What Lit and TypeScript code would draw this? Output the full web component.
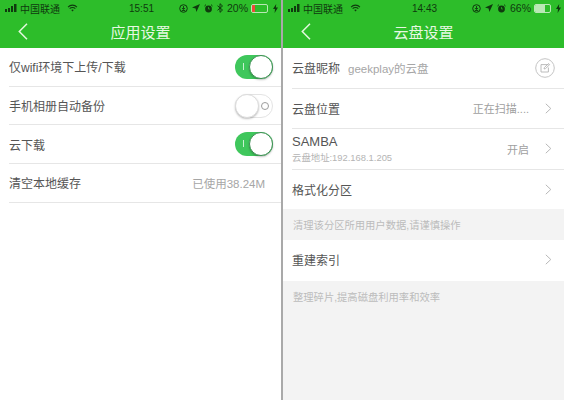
import { LitElement, html, css, svg } from "lit";
import { customElement } from "lit/decorators.js";

const chevron = html`<svg class="chev" width="7" height="11" viewBox="0 0 7 11"><path d="M.8.8l5 4.700-5 4.700" fill="none" stroke="#b8b8b8" stroke-width="1"/></svg>`;

const back = html`<svg class="back" width="10" height="17" viewBox="0 0 10 17"><path d="M9 .8L1.300 8.500 9 16.200" fill="none" stroke="#e4f7df" stroke-width="1.500"/></svg>`;

const signal = html`<svg width="12" height="8" viewBox="0 0 12 8"><path d="M0 5h2v3H0zM3 4h2v4H3zM6 2h2v6H6zM9 0h2.500v8H9z" fill="#0f3a0e"/></svg>`;

const wifi = html`<svg width="11" height="8" viewBox="0 0 12 9"><path d="M1 3.400a7 7 0 0 1 10 0M2.800 5.200a4.500 4.500 0 0 1 6.400 0" fill="none" stroke="#0f3a0e" stroke-width="1.200"/><path d="M4.600 6.800a2 2 0 0 1 2.800 0L6 8.300z" fill="#0f3a0e"/></svg>`;

const lock = html`<svg width="9" height="9" viewBox="0 0 9 9"><circle cx="4.500" cy="4.500" r="3.800" fill="none" stroke="#0f3a0e"/><path d="M4.500 2v3M3 4l1.500 1.600L6 4M2.800 6.500h3.400" fill="none" stroke="#0f3a0e" stroke-width=".9"/></svg>`;

const arrow = html`<svg width="8" height="8" viewBox="0 0 8 8"><path d="M8 0L0 3.600l3.600.8L4.400 8z" fill="#0f3a0e"/></svg>`;

const alarm = html`<svg width="9" height="9" viewBox="0 0 9 9"><circle cx="4.500" cy="5" r="3.400" fill="#0f3a0e"/><path d="M.5 2L2 .6M8.500 2L7 .6" stroke="#0f3a0e"/><path d="M4.500 3v2h1.400" fill="none" stroke="#2fbd2b" stroke-width=".7"/></svg>`;

const bluetooth = html`<svg width="6" height="10" viewBox="0 0 6 10"><path d="M.5 2.700l5 4.300L3 9.300V.7L5.500 3l-5 4.300" fill="none" stroke="#0f3a0e"/></svg>`;

const bolt = html`<svg width="5" height="9" viewBox="0 0 5 9"><path d="M3.200 0L0 5h2l-.4 4L5 3.600H2.900z" fill="#0f3a0e"/></svg>`;

const editIcon = svg`<circle cx="10" cy="10" r="9.300" fill="#fff" stroke="#c4c4c4"/><path d="M13.500 6.600H6v7.400h7.400V9.500" fill="none" stroke="#b4b4b4" stroke-width=".9"/><path d="M9 11l.4-1.500 4.200-4 1.100 1.100-4.200 4z" fill="none" stroke="#b4b4b4" stroke-width=".9"/>`;

function battery(level: number, color: string) {
  return html`<span class="battery"><span class="fill" style="width:${level}%;background:${color}"></span></span>`;
}

function statusBar(time: string, extra: unknown, pct: string, level: number, color: string) {
  return html`<div class="status">
    <div class="status-side">${signal}<span class="carrier">中国联通</span>${wifi}</div>
    <div class="time">${time}</div>
    <div class="status-side end">${lock}${arrow}${alarm}${extra}<span class="pct">${pct}</span>${battery(level, color)}${bolt}</div>
  </div>`;
}

@customElement("app-root")
export class AppRoot extends LitElement {
  static styles = css`
    :host {
      display: block;
      width: 564px;
      height: 400px;
      overflow: hidden;
      font-family: "Liberation Sans", "Noto Sans CJK SC", sans-serif;
    }
    .page {
      display: grid;
      grid-template-columns: 281px 283px;
      height: 400px;
    }
    .phone {
      display: flex;
      flex-direction: column;
      background: #fff;
      height: 400px;
    }
    .right {
      border-left: 2px solid #a9a9a9;
      background: #f3f3f3;
    }
    .head {
      background: #2dbd2a;
      height: 48px;
      flex: none;
      display: flex;
      flex-direction: column;
    }
    .status {
      height: 16px;
      padding: 0 3px 0 5px;
      display: grid;
      grid-template-columns: 1fr auto 1fr;
      align-items: center;
      color: #0f3a0e;
      font-size: 10px;
    }
    .status-side {
      display: flex;
      align-items: center;
      gap: 4px;
    }
    .status-side.end {
      justify-content: flex-end;
    }
    .carrier {
      margin-left: -1px;
      margin-right: 3px;
    }
    .time {
      font-size: 10px;
    }
    .pct {
      font-size: 10.500px;
      margin-right: -1px;
    }
    .battery {
      display: block;
      width: 15px;
      height: 7px;
      border: 1px solid #b9e8b5;
      border-radius: 2px;
      margin-right: 1px;
      overflow: hidden;
    }
    .fill {
      display: block;
      height: 100%;
    }
    .bar {
      flex: 1;
      display: flex;
      align-items: center;
      justify-content: center;
      position: relative;
      color: #e6f8e2;
      font-size: 15px;
      padding-bottom: 1px;
    }
    .back {
      position: absolute;
      left: 18px;
      top: 7px;
    }
    .list {
      background: #fff;
    }
    .row {
      display: flex;
      align-items: center;
      justify-content: space-between;
      margin-left: 9px;
      padding-right: 12px;
      height: 37.700px;
      border-bottom: 1px solid #e6e6e6;
      color: #555;
      font-size: 12px;
    }
    .row.tall {
      height: 39.500px;
    }
    .row.none {
      border-bottom: none;
    }
    .row.last {
      height: 40.500px;
      padding-bottom: 1px;
      box-sizing: border-box;
    }
    .row .muted {
      color: #a6a6a6;
      font-size: 11.500px;
    }
    .left-pad {
      padding-right: 8px;
    }
    .left-pad .muted {
      margin-right: 8px;
    }
    .value {
      display: flex;
      align-items: center;
      gap: 16px;
      color: #a0a0a0;
      font-size: 11px;
    }
    .chev {
      display: block;
    }
    .edit {
      display: block;
      margin-right: -3px;
    }
    .nick {
      display: flex;
      align-items: center;
      gap: 8px;
    }
    .stack {
      display: flex;
      flex-direction: column;
      gap: 1px;
    }
    .samba {
      font-size: 13px;
    }
    .addr {
      font-size: 9.400px;
      color: #b4b4b4;
    }
    .note {
      height: 31px;
      padding-left: 10px;
      display: flex;
      align-items: center;
      font-size: 10.300px;
      color: #bcbcbc;
    }
    .toggle {
      display: block;
      position: relative;
      box-sizing: border-box;
      width: 38px;
      height: 24px;
      border-radius: 12px;
      background: #3fc75c;
    }
    .toggle.off {
      background: #fff;
      border: 1px solid #e4e4e4;
    }
    .toggle .mark {
      position: absolute;
      left: 8px;
      top: 8px;
      width: 1px;
      height: 7px;
      background: #c9f0d2;
    }
    .toggle.off .mark {
      left: auto;
      right: 3px;
      top: 7px;
      width: 6px;
      height: 6px;
      border: 1px solid #9c9c9c;
      border-radius: 50%;
      background: none;
    }
    .knob {
      position: absolute;
      top: 0;
      right: 0;
      box-sizing: border-box;
      width: 24px;
      height: 24px;
      border-radius: 50%;
      background: #fff;
      border: 1px solid #3c8f52;
      box-shadow: 0 1px 2px rgba(0, 0, 0, 0.25);
    }
    .toggle.off .knob {
      top: -1px;
      right: auto;
      left: -1px;
      width: 24px;
      height: 24px;
      border: 1px solid #dcdcdc;
    }
  `;

  private toggle(on: boolean) {
    return html`<span class="toggle ${on ? "" : "off"}"><span class="mark"></span><span class="knob"></span></span>`;
  }

  protected render() {
    return html`<div class="page">
      <section class="phone">
        <div class="head">
          ${statusBar("15:51", bluetooth, "20%", 22, "#f0483a")}
          <div class="bar">${back}应用设置</div>
        </div>
        <div class="list">
          <div class="row left-pad">仅wifi环境下上传/下载${this.toggle(true)}</div>
          <div class="row left-pad">手机相册自动备份${this.toggle(false)}</div>
          <div class="row left-pad">云下载${this.toggle(true)}</div>
          <div class="row left-pad">清空本地缓存<span class="muted">已使用38.24M</span></div>
        </div>
      </section>
      <section class="phone right">
        <div class="head">
          ${statusBar("14:43", "", "66%", 66, "#b9e8b5")}
          <div class="bar">${back}云盘设置</div>
        </div>
        <div class="list">
          <div class="row tall">
            <div class="nick">云盘昵称<span class="muted">geekplay的云盘</span></div>
            <svg class="edit" width="20" height="20" viewBox="0 0 20 20">${editIcon}</svg>
          </div>
          <div class="row tall"><span>云盘位置</span><span class="value">正在扫描....${chevron}</span></div>
          <div class="row tall">
            <div class="stack"><span class="samba">SAMBA</span><span class="addr">云盘地址:192.168.1.205</span></div>
            <span class="value">开启${chevron}</span>
          </div>
          <div class="row tall none"><span>格式化分区</span>${chevron}</div>
        </div>
        <div class="note">清理该分区所用用户数据,请谨慎操作</div>
        <div class="list">
          <div class="row last none"><span>重建索引</span>${chevron}</div>
        </div>
        <div class="note">整理碎片,提高磁盘利用率和效率</div>
      </section>
    </div>`;
  }
}
